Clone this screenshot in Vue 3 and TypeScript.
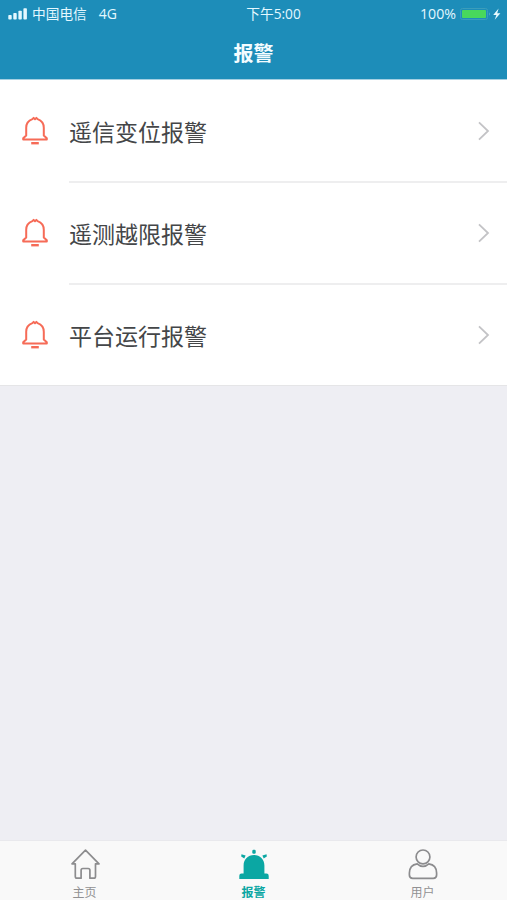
<script setup lang="ts">
interface AlarmType {
  id: string
  label: string
}

interface Tab {
  id: 'home' | 'alarm' | 'user'
  label: string
}

const alarms: AlarmType[] = [
  { id: 'signal', label: '遥信变位报警' },
  { id: 'limit', label: '遥测越限报警' },
  { id: 'platform', label: '平台运行报警' },
]

const tabs: Tab[] = [
  { id: 'home', label: '主页' },
  { id: 'alarm', label: '报警' },
  { id: 'user', label: '用户' },
]

const activeTab: Tab['id'] = 'alarm'
</script>

<template>
  <div class="screen">
    <header class="header">
      <div class="status">
        <div class="carrier">
          <svg class="signal" width="20" height="12" viewBox="0 0 20 12" fill="#e4f8ff">
            <rect x="0.3" y="7" width="3.4" height="4.5" rx="0.8" />
            <rect x="5.3" y="5" width="3.4" height="6.5" rx="0.8" />
            <rect x="10.4" y="2.7" width="3.4" height="8.8" rx="0.8" />
            <rect x="15.4" y="0.3" width="3.5" height="11.2" rx="0.8" />
          </svg>
          <span>中国电信</span>
          <span class="network">4G</span>
        </div>
        <div class="clock">下午5:00</div>
        <div class="power">
          <span class="percent">100%</span>
          <svg width="42" height="14" viewBox="0 0 42 14">
            <rect x="0.5" y="1.5" width="27" height="11" rx="2" fill="none" stroke="#3b9dbb" />
            <rect x="2" y="3" width="24" height="8" rx="0.8" fill="#48d85c" />
            <path d="M29.3 5.2q1.6 1.8 0 3.6z" fill="#6db9d3" />
            <path d="M38.6 1.6L33.2 8H36.4L34.7 12.8L40.4 6.2H37.2Z" fill="#e8fbff" />
          </svg>
        </div>
      </div>
      <h1 class="title">报警</h1>
    </header>

    <main class="list">
      <div v-for="alarm in alarms" :key="alarm.id" class="row">
        <svg class="bell" width="28" height="30" viewBox="0 0 28 30" fill="none" stroke="#f66b57" stroke-width="2">
          <path d="M2.2 23.5H25.8V22.2L22.8 19.4V11.8C22.8 7.6 20.4 4.4 16.6 3.1L15.4 1.9L14 3.3L12.6 1.9L11.4 3.1C7.6 4.4 5.2 7.6 5.2 11.8V19.4L2.2 22.2Z" stroke-linejoin="round" />
          <path d="M10.2 27.2H17.8" stroke-width="2.4" />
        </svg>
        <div class="body">
          <span class="label">{{ alarm.label }}</span>
          <svg class="chevron" width="12" height="20" viewBox="0 0 12 20" fill="none" stroke="#c3c3c6" stroke-width="1.8">
            <path d="M1 1.3L10 10L1 18.7" />
          </svg>
        </div>
      </div>
    </main>

    <nav class="tabs">
      <div v-for="tab in tabs" :key="tab.id" class="tab" :class="{ active: tab.id === activeTab }">
        <svg v-if="tab.id === 'home'" class="tab-icon" width="32" height="34" viewBox="0 0 32 34" fill="none" stroke="#8c8c8e" stroke-width="1.7" stroke-linejoin="round">
          <path d="M6.3 16.8H3L16.5 3.2L30 16.8H26.5V29.5Q26.5 31.2 24.8 31.2H20.9V23.2Q20.9 21.5 19.2 21.5H13.8Q12.1 21.5 12.1 23.2V31.2H8Q6.3 31.2 6.3 29.5Z" />
        </svg>
        <svg v-else-if="tab.id === 'alarm'" class="tab-icon" width="32" height="34" viewBox="0 0 32 34" fill="#0ba7a3">
          <path d="M5.6 26.5V18.5C5.6 12.3 10 8.1 16 8.1S26.4 12.3 26.4 18.5V26.5H28.5Q30.7 26.5 30.7 28.7V32H1.3V28.7Q1.3 26.5 3.5 26.5Z" />
          <rect x="14.3" y="2.8" width="3.4" height="4" rx="1.2" />
          <path d="M3.5 7.2L7.6 8.6L6.3 11.6L3.2 9.4Z" />
          <path d="M28.5 7.2L24.4 8.6L25.7 11.6L28.8 9.4Z" />
        </svg>
        <svg v-else class="tab-icon" width="32" height="34" viewBox="0 0 32 34" fill="none" stroke="#8c8c8e" stroke-width="1.7">
          <circle cx="16" cy="9.9" r="6.9" />
          <path d="M10.2 16.8C5.2 17.5 2.4 20.8 2.4 26V28Q2.4 31.3 5.7 31.3H26.3Q29.6 31.3 29.6 28V26C29.6 20.8 26.8 17.5 21.8 16.8Q19 19.4 16 19.4T10.2 16.8Z" stroke-linejoin="round" />
        </svg>
        <span class="tab-label">{{ tab.label }}</span>
      </div>
    </nav>
  </div>
</template>

<style>
body {
  margin: 0;
}
</style>

<style scoped>
.screen {
  display: flex;
  flex-direction: column;
  height: 900px;
  overflow: hidden;
  background: #eeeef3;
  font-family: "Open Sans", "Noto Sans CJK SC", sans-serif;
}

.header {
  box-sizing: border-box;
  height: 80px;
  background: #1d8db9;
  border-bottom: 1px solid #a5d0e2;
  color: #e4f8ff;
}

.status {
  display: grid;
  grid-template-columns: 1fr auto 1fr;
  align-items: center;
  height: 28px;
  padding: 0 5px 0 8px;
  font-size: 13.7px;
  line-height: 28px;
  white-space: nowrap;
}

.carrier,
.power {
  display: flex;
  align-items: center;
}

.signal {
  margin-right: 4px;
}

.network {
  margin-left: 12px;
  font-size: 14px;
}

.clock {
  padding-left: 37px;
}

.power {
  justify-content: flex-end;
}

.percent {
  margin-right: 4px;
  font-size: 14.2px;
}

.title {
  margin: 0;
  text-align: center;
  font-size: 20px;
  line-height: 51px;
  font-weight: 700;
  color: #f4fcff;
}

.list {
  box-sizing: border-box;
  height: 306px;
  background: #fff;
  border-bottom: 1px solid #e5e5e7;
}

.row {
  display: flex;
  height: 102px;
  padding-left: 21px;
}

.bell {
  flex: none;
  margin: 36px 20px 0 0;
}

.body {
  flex: 1;
  display: flex;
  align-items: center;
  justify-content: space-between;
  box-sizing: border-box;
  height: 103px;
  padding-right: 17px;
  border-bottom: 2px solid #eeeeef;
}

.row:last-child .body {
  border-bottom-color: transparent;
}

.label {
  padding-top: 2px;
  font-size: 23px;
  line-height: 34px;
  color: #444648;
}

.tabs {
  box-sizing: border-box;
  display: flex;
  height: 60px;
  margin-top: auto;
  background: #f9f9f9;
  border-top: 1px solid #e9e9ed;
}

.tab {
  flex: 1;
  display: flex;
  flex-direction: column;
  align-items: center;
  padding-top: 6px;
  color: #919193;
}

.tab-icon {
  flex: none;
}

.tab-label {
  margin-top: 2px;
  font-size: 12px;
  line-height: 20px;
}

.active {
  color: #0ba7a3;
}

.active .tab-label {
  font-weight: 700;
}
</style>
